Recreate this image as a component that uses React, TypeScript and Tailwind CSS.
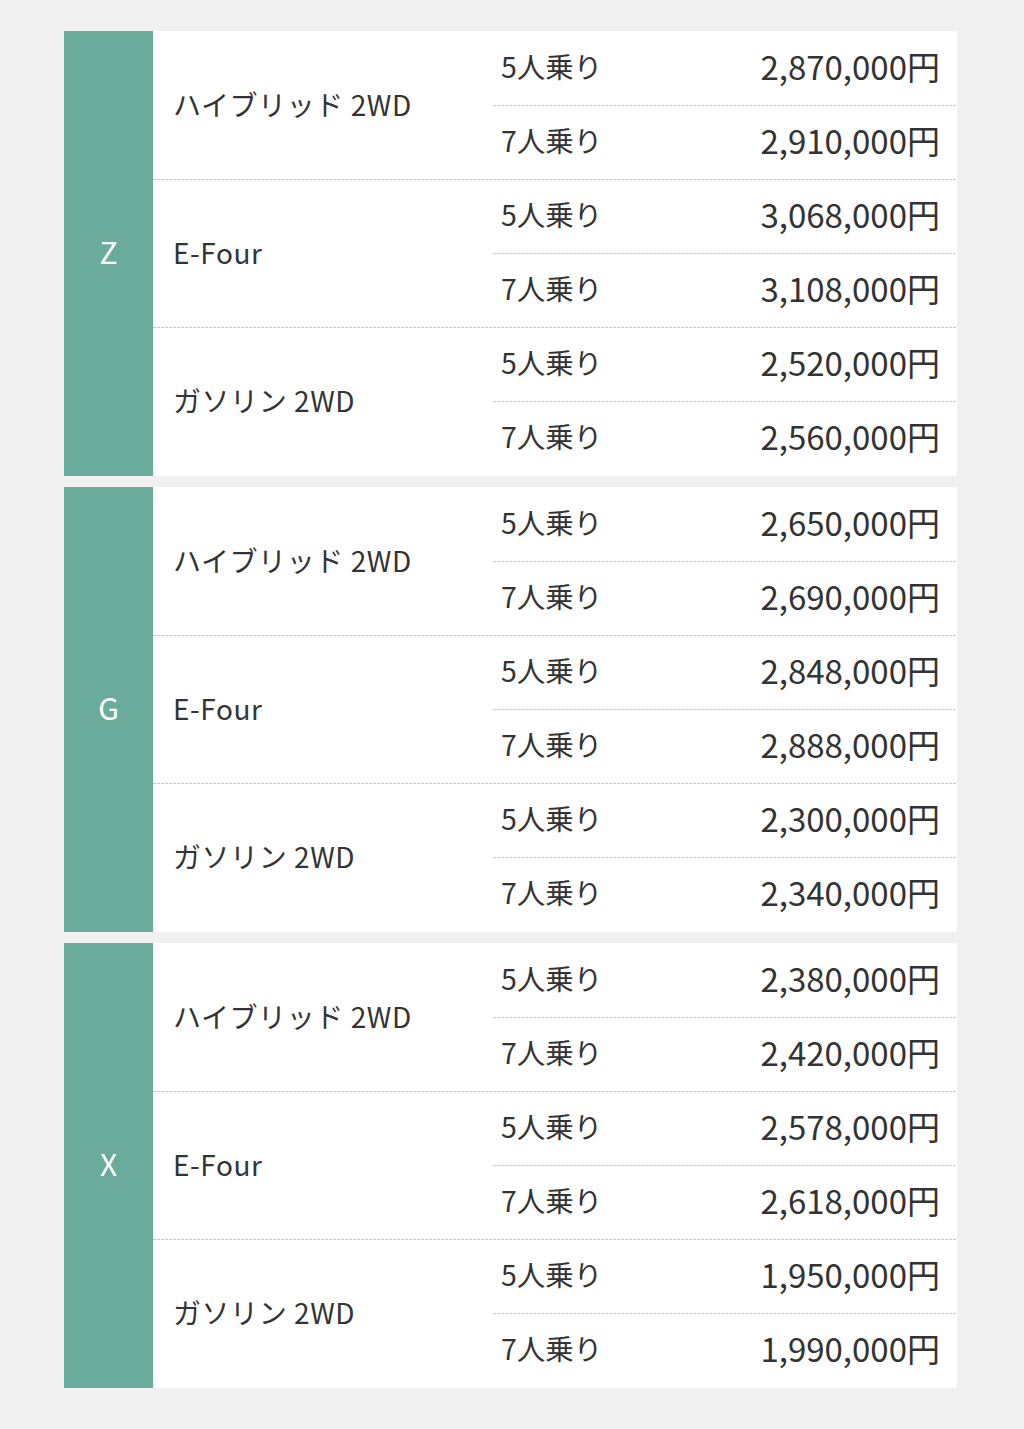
import React from "react";

const groups = [
  {
    grade: "Z",
    models: [
      { name: "ハイブリッド 2WD", prices: ["2,870,000円", "2,910,000円"] },
      { name: "E-Four", prices: ["3,068,000円", "3,108,000円"] },
      { name: "ガソリン 2WD", prices: ["2,520,000円", "2,560,000円"] },
    ],
  },
  {
    grade: "G",
    models: [
      { name: "ハイブリッド 2WD", prices: ["2,650,000円", "2,690,000円"] },
      { name: "E-Four", prices: ["2,848,000円", "2,888,000円"] },
      { name: "ガソリン 2WD", prices: ["2,300,000円", "2,340,000円"] },
    ],
  },
  {
    grade: "X",
    models: [
      { name: "ハイブリッド 2WD", prices: ["2,380,000円", "2,420,000円"] },
      { name: "E-Four", prices: ["2,578,000円", "2,618,000円"] },
      { name: "ガソリン 2WD", prices: ["1,950,000円", "1,990,000円"] },
    ],
  },
];

const seats = ["5人乗り", "7人乗り"];

function Dash() {
  return (
    <div className="h-px w-full bg-[repeating-linear-gradient(to_right,#c9c9c9_0_3px,transparent_3px_4px)]" />
  );
}

export default function App() {
  return (
    <div
      className="min-h-[1429px] w-[1024px] bg-[#f0f0f0] pt-[31px] pl-[64px] text-[#333333]"
      style={{ fontFamily: '"Noto Sans CJK JP", "Noto Sans", sans-serif' }}
    >
      <div className="flex w-[893px] flex-col gap-[11px]">
        {groups.map((g) => (
          <div key={g.grade} className="flex bg-white">
            <div className="flex w-[89px] shrink-0 items-center justify-center bg-[#6aab9c] pb-[4px] text-[30px] text-white">
              {g.grade}
            </div>
            <div className="flex flex-1 flex-col pt-px">
              {g.models.map((m, mi) => (
                <div key={mi} className="flex flex-col">
                  <div className="flex">
                    <div className="flex w-[340px] shrink-0 items-center pb-[4px] pl-[20px] text-[28px] tracking-[0.02em]">
                      {m.name}
                    </div>
                    <div className="flex flex-1 flex-col">
                      {m.prices.map((p, pi) => (
                        <div key={pi} className="flex flex-col">
                          <div className="flex h-[73px] items-center justify-between pb-[4px] pl-[8px] pr-[17px]">
                            <span className="text-[28.5px]">{seats[pi]}</span>
                            <span className="text-[33px]">{p}</span>
                          </div>
                          {pi === 0 && <Dash />}
                        </div>
                      ))}
                    </div>
                  </div>
                  {mi < 2 ? <Dash /> : <div className="h-px" />}
                </div>
              ))}
            </div>
          </div>
        ))}
      </div>
    </div>
  );
}
